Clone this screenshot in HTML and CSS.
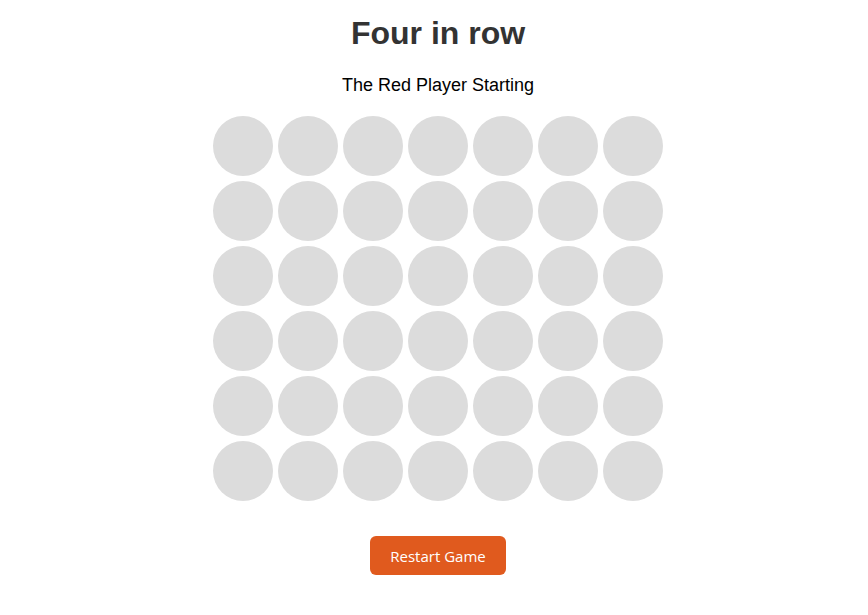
FILE: index.html
```html
<!DOCTYPE html>
<html lang="en">
<head>
<meta charset="utf-8">
<title>Four in row</title>
<link rel="stylesheet" href="styles.css">
</head>
<body>
<main class="app">
  <h1 class="title">Four in row</h1>
  <p class="status">The Red Player Starting</p>
  <div class="board">
    <div class="cell"></div><div class="cell"></div><div class="cell"></div><div class="cell"></div><div class="cell"></div><div class="cell"></div><div class="cell"></div>
    <div class="cell"></div><div class="cell"></div><div class="cell"></div><div class="cell"></div><div class="cell"></div><div class="cell"></div><div class="cell"></div>
    <div class="cell"></div><div class="cell"></div><div class="cell"></div><div class="cell"></div><div class="cell"></div><div class="cell"></div><div class="cell"></div>
    <div class="cell"></div><div class="cell"></div><div class="cell"></div><div class="cell"></div><div class="cell"></div><div class="cell"></div><div class="cell"></div>
    <div class="cell"></div><div class="cell"></div><div class="cell"></div><div class="cell"></div><div class="cell"></div><div class="cell"></div><div class="cell"></div>
    <div class="cell"></div><div class="cell"></div><div class="cell"></div><div class="cell"></div><div class="cell"></div><div class="cell"></div><div class="cell"></div>
  </div>
  <button class="restart" type="button">Restart Game</button>
</main>
</body>
</html>
```
FILE: styles.css
```css
html, body {
  margin: 0;
  padding: 0;
  background: #ffffff;
}

body {
  font-family: "Liberation Sans", Arial, sans-serif;
}

.app {
  margin-left: 8px;
  padding-top: 15px;
  display: flex;
  flex-direction: column;
  align-items: center;
  text-align: center;
}

.title {
  margin: 0;
  font-size: 32px;
  line-height: 37px;
  font-weight: bold;
  color: #333333;
}

.status {
  margin: 23px 0 0;
  font-size: 18px;
  line-height: 21px;
  color: #000000;
}

.board {
  margin-top: 20px;
  display: grid;
  grid-template-columns: repeat(7, 60px);
  grid-auto-rows: 60px;
  gap: 5px;
}

.cell {
  width: 60px;
  height: 60px;
  border-radius: 50%;
  background: #dcdcdc;
}

.restart {
  margin-top: 35px;
  height: 39px;
  padding: 0 20px;
  border: none;
  border-radius: 6px;
  background: #e05a1e;
  color: #ffffff;
  font-family: "Open Sans", sans-serif;
  font-size: 15px;
  cursor: pointer;
}
```
